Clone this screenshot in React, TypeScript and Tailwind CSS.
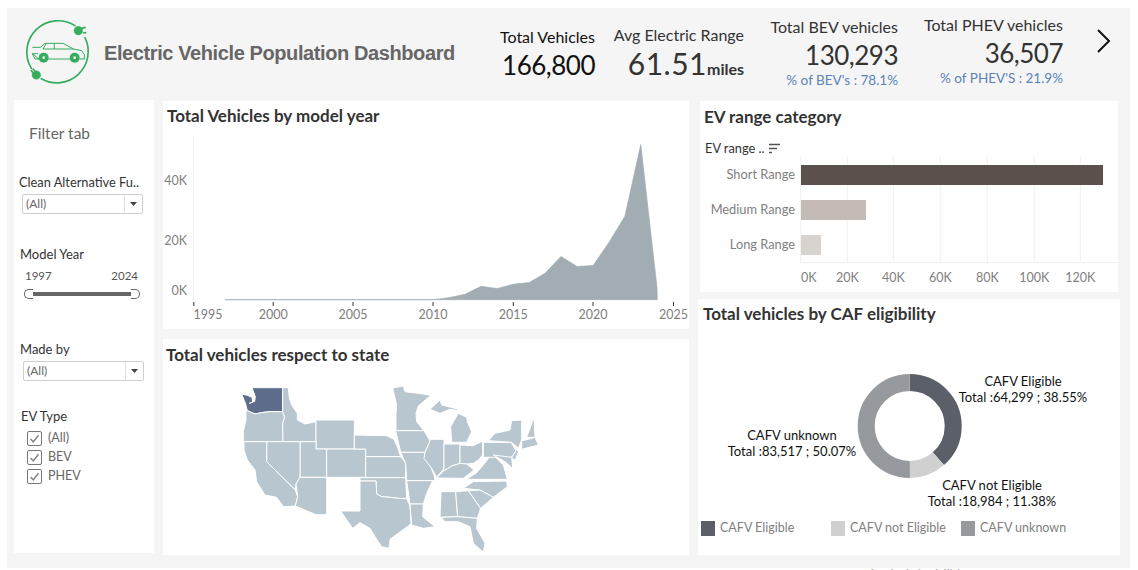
import React from "react";

const font = "font-['Lato','Noto_Sans',sans-serif]";

function Logo() {
  return (
    <svg viewBox="70 50 210 210" width={70} height={70} className="shrink-0" fill="none">
      <g stroke="#35ad5c" strokeWidth="5" strokeLinecap="round">
        <path d="M226 76 A94 94 0 0 0 95 204" />
        <path d="M256 112 A94 94 0 0 1 125 235" />
      </g>
      <g fill="#35ad5c" stroke="#35ad5c">
        <circle cx="236" cy="91" r="13" />
        <path d="M246 84l12 -3M250 98l10 -1" strokeWidth="5" />
        <circle cx="110" cy="224" r="13" />
        <path d="M100 218l-6 -9M106 212l-7 -7" strokeWidth="5" />
      </g>
      <path
        d="M98 141 H122 L136 129 H190 L222 146 L246 151 L254 162 V176 H240 M212 176 H146 M118 176 H106 L98 160 Z M98 160 H115 M140 129 L130 146 H222 M164 129 V146"
        stroke="#35ad5c"
        strokeWidth="3"
        fill="none"
      />
      <g fill="#35ad5c">
        <circle cx="132" cy="172" r="15" />
        <circle cx="225" cy="172" r="15" />
      </g>
      <g fill="#f5f5f5">
        <circle cx="132" cy="172" r="4" />
        <circle cx="225" cy="172" r="4" />
      </g>
    </svg>
  );
}

function Stat({
  title,
  value,
  sub,
  width,
  top,
  suffix,
  dark,
}: {
  title: string;
  value: string;
  sub?: string;
  width: string;
  top: string;
  suffix?: string;
  dark?: boolean;
}) {
  return (
    <div className={`${width} ${top} flex flex-col items-end shrink-0`}>
      <div className={`text-[16px] leading-[20px] whitespace-nowrap ${dark ? "text-[#111]" : "text-[#333]"}`}>{title}</div>
      <div className={`leading-[36px] whitespace-nowrap ${dark ? "text-[#111]" : "text-[#333]"}`}>
        <span className={suffix ? "text-[30px] tracking-[0.5px]" : "text-[26px] tracking-[-0.5px]"}>{value}</span>
        {suffix && <span className="text-[16px] font-bold">{suffix}</span>}
      </div>
      {sub && <div className="text-[13.5px] leading-[16px] -mt-[5px] text-[#5b83b5] whitespace-nowrap">{sub}</div>}
    </div>
  );
}

function Select() {
  return (
    <div className="w-[121px] h-[20px] border border-[#cfcfcf] rounded-[2px] flex items-center bg-white">
      <span className="flex-1 pl-[3px] text-[12px] text-[#666]">(All)</span>
      <span className="w-[18px] h-full border-l border-[#e0e0e0] flex items-center justify-center">
        <svg width="7" height="4" viewBox="0 0 7 4">
          <path d="M0 0H7L3.5 4Z" fill="#444" />
        </svg>
      </span>
    </div>
  );
}

function Checkbox({ label }: { label: string }) {
  return (
    <div className="flex items-center h-[19px]">
      <span className="w-[15px] h-[15px] border border-[#777] rounded-[2px] flex items-center justify-center bg-white">
        <svg width="11" height="11" viewBox="0 0 11 11" fill="none">
          <path d="M1.5 6L4.3 8.8L9.5 2.2" stroke="#888" strokeWidth="1.5" />
        </svg>
      </span>
      <span className="ml-[6px] text-[12.5px] text-[#666]">{label}</span>
    </div>
  );
}

function Filter() {
  return (
    <aside className="w-[140px] h-[453px] bg-white shrink-0 flex flex-col text-[13px] text-[#333]">
      <div className="pl-[15px] pt-[24px] text-[15.5px] leading-[18px] text-[#666]">Filter tab</div>
      <div className="pl-[5px] mt-[32px] leading-[16px] whitespace-nowrap text-[12.8px]">Clean Alternative Fu..</div>
      <div className="pl-[8px] mt-[4px]">
        <Select />
      </div>
      <div className="pl-[6px] mt-[32px] leading-[16px]">Model Year</div>
      <div className="pl-[11px] pr-[16px] mt-[7px] flex justify-between leading-[14px] text-[11.5px] text-[#555]">
        <span>1997</span>
        <span>2024</span>
      </div>
      <div className="pl-[10px] mt-[6px] flex items-center w-[126px]">
        <span className="w-[9px] h-[10px] border border-[#666] border-r-0 rounded-l-[5px] bg-white shrink-0" />
        <span className="flex-1 h-[4px] bg-[#666]" />
        <span className="w-[9px] h-[10px] border border-[#666] border-l-0 rounded-r-[5px] bg-white shrink-0" />
      </div>
      <div className="pl-[6px] mt-[42px] leading-[16px]">Made by</div>
      <div className="pl-[9px] mt-[4px]">
        <Select />
      </div>
      <div className="pl-[7px] mt-[27px] leading-[16px]">EV Type</div>
      <div className="pl-[13px] mt-[5px] flex flex-col">
        <Checkbox label="(All)" />
        <Checkbox label="BEV" />
        <Checkbox label="PHEV" />
      </div>
    </aside>
  );
}

const areaPoints =
  "192,596 808,596 855,590 902,580 950,556 997,563 1045,550 1092,545 1139,517 1186,467 1234,497 1281,494 1328,425 1375,347 1422,133 1470,560 1471,596";

function LineChart() {
  const ticks = [
    [193.8, "1995", 208],
    [273.2, "2000", 273.2],
    [353, "2005", 353],
    [433, "2010", 433],
    [513.3, "2015", 513.3],
    [593, "2020", 593],
    [673.5, "2025", 673.5],
  ] as const;
  return (
    <svg viewBox="163 125 526 204" width={526} height={204} className="block">
      <line x1="193.5" y1="137" x2="193.5" y2="300" stroke="#f0f0f0" />
      <g transform="translate(160 100) scale(0.3381 0.335)">
        <polygon points={areaPoints} fill="#a1adb2" stroke="#a1adb2" strokeWidth="2" />
      </g>
      {[
        [180, "40K"],
        [240, "20K"],
        [290, "0K"],
      ].map(([y, t]) => (
        <text key={t} x="187" y={Number(y) + 5} textAnchor="end" fontSize="12.5" fill="#808080">
          {t}
        </text>
      ))}
      {ticks.map(([x, t, lx]) => (
        <g key={t}>
          <line x1={x} x2={x} y1="302" y2="306" stroke="#333" />
          <text x={lx} y="319" textAnchor="middle" fontSize="12.5" fill="#808080">
            {t}
          </text>
        </g>
      ))}
    </svg>
  );
}

const states: [string, string][] = [
  ["WA", "126,23 218,23 218,95 180,95 160,97 135,102 112,92 107,72 95,42 112,46 126,52 128,66 118,70 134,64 136,50"],
  ["OR", "108,95 112,92 135,102 160,97 180,95 218,95 224,112 218,130 219,185 100,185 100,155 108,120"],
  ["ID", "218,23 235,23 238,55 245,75 262,100 262,120 285,132 318,125 318,185 219,185 218,130 224,112 218,95"],
  ["WY", "318,120 433,120 433,207 318,207"],
  ["UT", "270,185 318,185 318,207 350,207 350,292 270,292"],
  ["NV", "170,185 270,185 270,292 258,312 256,330 170,245"],
  ["CA", "102,185 170,185 170,245 256,330 263,350 256,378 220,380 200,352 165,345 140,305 135,270 112,240 102,210"],
  ["AZ", "270,292 350,292 350,404 318,404 256,378 263,350 258,312"],
  ["CO", "350,207 467,207 467,292 350,292"],
  ["NE", "433,165 530,167 552,178 562,200 572,230 467,230 467,207 433,207"],
  ["KS", "467,230 572,230 587,250 587,293 467,293"],
  ["OK", "450,293 587,293 590,356 565,355 540,352 515,350 500,342 498,303 450,303"],
  ["TX", "450,303 498,303 500,342 515,350 540,352 565,355 590,356 600,378 603,432 575,452 540,478 537,505 515,500 495,470 480,445 450,428 428,445 392,393 450,393"],
  ["MN", "548,24 580,18 585,35 640,42 662,46 625,78 618,100 620,125 642,152 558,152 558,100 560,75"],
  ["IA", "557,152 642,152 660,183 645,217 572,217 567,195"],
  ["MO", "572,217 645,217 645,235 660,255 672,285 675,302 590,302 587,250"],
  ["AR", "590,302 668,302 650,340 640,372 600,372"],
  ["LA", "600,372 640,372 638,410 675,440 640,445 605,435"],
  ["IL", "660,178 702,178 702,265 680,292 665,265 642,235 645,217 660,183"],
  ["MI1", "660,88 690,60 695,75 735,85 768,95 720,88 690,100"],
  ["MI2", "725,187 722,140 745,100 770,112 772,125 785,155 770,187"],
  ["IN", "702,192 750,192 750,250 725,258 698,275 702,265"],
  ["OH", "750,195 790,197 818,183 818,225 805,240 790,250 770,252 750,250"],
  ["KY", "680,294 698,275 725,258 750,250 770,252 792,270 760,295"],
  ["VA", "770,298 800,278 820,255 835,235 850,225 880,255 892,298"],
  ["NC", "760,325 790,305 890,303 892,320 850,352 810,330"],
  ["PA", "820,187 905,187 918,212 905,232 820,232"],
  ["NY", "835,182 855,160 900,150 905,122 935,120 935,180 925,205 905,187"],
  ["VT", "950,172 972,112 975,172"],
  ["MA", "935,183 975,172 985,195 935,208"],
  ["NJ", "905,190 925,215 915,242 905,232 918,212"],
  ["MD", "850,225 905,232 908,265 885,245"],
  ["AL", "693,335 737,335 743,410 690,412"],
  ["GA", "737,335 775,332 812,385 802,415 743,410"],
  ["SC", "775,332 810,330 850,352 812,385"],
  ["FL", "693,412 743,410 802,415 800,445 825,490 820,517 790,490 780,440 745,425 705,425"],
];

function UsMap() {
  return (
    <svg viewBox="0 0 1020 525" width={340} height={175} className="block ml-[47px]">
      {states.map(([id, pts]) => (
        <polygon
          key={id}
          points={pts}
          fill={id === "WA" ? "#5f6d8c" : "#b8c6cf"}
          stroke="#ffffff"
          strokeWidth="3"
          strokeLinejoin="round"
        />
      ))}
    </svg>
  );
}

function BarChart() {
  const grid = [800.7, 847.3, 893.3, 940.3, 987.3, 1034.3, 1080.3];
  const labels = ["0K", "20K", "40K", "60K", "80K", "100K", "120K"];
  const bars = [
    ["Short Range", 165, 1103, "#5a504c"],
    ["Medium Range", 200, 866, "#c5bbb6"],
    ["Long Range", 235, 821, "#d9d3d0"],
  ] as const;
  return (
    <svg viewBox="700 138 418 154" width={418} height={154} className="block">
      <text x="705" y="153" fontSize="12.8" fill="#333">
        EV range ..
      </text>
      <path d="M769 144.5H780M769 148.5H777M769 152.5H772" stroke="#555" strokeWidth="1.6" />
      {grid.map((x, i) => (
        <g key={x}>
          <line x1={x} x2={x} y1="157" y2="262" stroke="#f0f0f0" />
          <text x={x + (i === 0 ? 8 : 0)} y="282" textAnchor="middle" fontSize="12.5" fill="#808080">
            {labels[i]}
          </text>
        </g>
      ))}
      <line x1="800" x2="1118" y1="262.5" y2="262.5" stroke="#f0f0f0" />
      {bars.map(([t, y, r, c]) => (
        <g key={t}>
          <rect x="801" y={y} width={r - 801} height="20" fill={c} />
          <text x="795" y={y + 14} textAnchor="end" fontSize="12.8" fill="#808080">
            {t}
          </text>
        </g>
      ))}
    </svg>
  );
}

function Donut() {
  const segs = [
    [38.55, 0, "#5b6068"],
    [11.38, 38.55, "#d0d0d0"],
    [50.07, 49.93, "#969a9f"],
  ] as const;
  const Label = ({ x, y, a, b }: { x: number; y: number; a: string; b: string }) => (
    <text textAnchor="middle" fontSize="13" fill="#111">
      <tspan x={x} y={y}>
        {a}
      </tspan>
      <tspan x={x} y={y + 16}>
        {b}
      </tspan>
    </text>
  );
  return (
    <svg viewBox="698 328 422 184" width={422} height={184} className="block">
      <g transform="rotate(-90 909.7 426)">
        {segs.map(([len, off, c]) => (
          <circle
            key={c}
            cx="909.7"
            cy="426"
            r="43.5"
            fill="none"
            stroke={c}
            strokeWidth="17"
            pathLength={100}
            strokeDasharray={`${len} ${100 - len}`}
            strokeDashoffset={-off}
          />
        ))}
      </g>
      <Label x={1023} y={386} a="CAFV Eligible" b="Total :64,299 ; 38.55%" />
      <Label x={792} y={440} a="CAFV unknown" b="Total :83,517 ; 50.07%" />
      <Label x={992} y={490} a="CAFV not Eligible" b="Total :18,984 ; 11.38%" />
    </svg>
  );
}

function Legend({ color, label, w }: { color: string; label: string; w: string }) {
  return (
    <div className={`flex items-center ${w}`}>
      <span className="w-[14px] h-[15px] shrink-0" style={{ backgroundColor: color }} />
      <span className="ml-[5px] text-[12.5px] text-[#808080] whitespace-nowrap">{label}</span>
    </div>
  );
}

export default function App() {
  return (
    <div className={`w-[1138px] h-[570px] overflow-hidden bg-white ${font}`}>
      <div className="pt-[8px] pl-[7px] pr-[8px]">
        <div className="h-[560px] bg-[#f5f5f5] flex flex-col">
          <header className="h-[84px] flex shrink-0">
            <div className="pl-[16px] pt-[9px]">
              <Logo />
            </div>
            <h1 className="ml-[11px] mt-[34px] w-[351px] shrink-0 font-['Liberation_Sans',sans-serif] font-bold text-[20px] tracking-[-0.4px] leading-[23px] text-[#666] whitespace-nowrap">
              Electric Vehicle Population Dashboard
            </h1>
            <Stat title="Total Vehicles" value="166,800" width="w-[140px]" top="mt-[19px]" dark />
            <Stat title="Avg Electric Range" value="61.51" suffix="miles" width="w-[149px]" top="mt-[17px]" />
            <Stat title="Total BEV vehicles" value="130,293" sub="% of BEV's : 78.1%" width="w-[154px]" top="mt-[9px]" />
            <Stat title="Total PHEV vehicles" value="36,507" sub="% of PHEV'S : 21.9%" width="w-[165px]" top="mt-[7px]" />
            <div className="ml-[33px] mt-[21px]">
              <svg width="16" height="24" viewBox="0 0 16 24" fill="none">
                <path d="M2 1L13 12L2 23" stroke="#111" strokeWidth="2" />
              </svg>
            </div>
          </header>
          <main className="flex pl-[7px] mt-[8px]">
            <Filter />
            <div className="ml-[9px] w-[526px] shrink-0 flex flex-col mt-[1px]">
              <section className="h-[228px] bg-white">
                <h2 className="pl-[4px] pt-[5px] h-[24px] text-[17px] leading-[20px] font-bold text-[#333]">
                  Total Vehicles by model year
                </h2>
                <LineChart />
              </section>
              <section className="mt-[10px] h-[216px] bg-white overflow-hidden">
                <h2 className="pl-[3px] pt-[6px] h-[41px] text-[17px] leading-[20px] font-bold text-[#333]">
                  Total vehicles respect to state
                </h2>
                <UsMap />
              </section>
            </div>
            <div className="ml-[9px] w-[422px] shrink-0 flex flex-col mt-[1px]">
              <section className="ml-[2px] w-[418px] h-[191px] bg-white">
                <h2 className="pl-[4px] pt-[6px] h-[37px] text-[17px] leading-[20px] font-bold text-[#333]">
                  EV range category
                </h2>
                <BarChart />
              </section>
              <section className="mt-[7px] h-[256px] bg-white">
                <h2 className="pl-[5px] pt-[5px] h-[29px] text-[17px] leading-[20px] font-bold text-[#333]">
                  Total vehicles by CAF eligibility
                </h2>
                <Donut />
                <div className="flex pl-[3px] mt-[7px]">
                  <Legend color="#5b6068" label="CAFV Eligible" w="w-[130px]" />
                  <Legend color="#d0d0d0" label="CAFV not Eligible" w="w-[130px]" />
                  <Legend color="#969a9f" label="CAFV unknown" w="w-[130px]" />
                </div>
              </section>
            </div>
          </main>
        </div>
      </div>
      <div className="pl-[868px] text-[13px] leading-[12px] text-[#aaa] whitespace-nowrap">Analysis by Mihir</div>
    </div>
  );
}
